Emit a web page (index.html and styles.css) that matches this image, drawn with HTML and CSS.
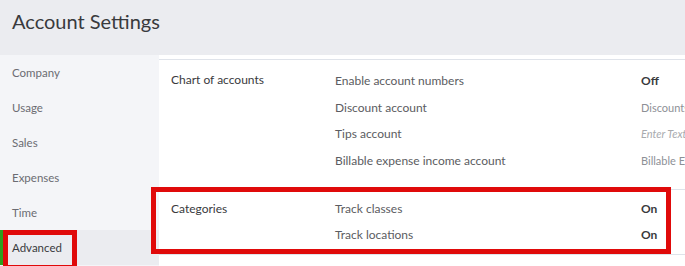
FILE: index.html
```html
<!DOCTYPE html>
<html lang="en">
<head>
<meta charset="utf-8">
<title>Account Settings</title>
<link rel="stylesheet" href="styles.css">
</head>
<body>
<div class="page">
  <header class="header">
    <h1 class="title">Account Settings</h1>
  </header>
  <div class="body">
    <nav class="sidebar">
      <div class="nav-item">Company</div>
      <div class="nav-item">Usage</div>
      <div class="nav-item">Sales</div>
      <div class="nav-item">Expenses</div>
      <div class="nav-item">Time</div>
      <div class="nav-item active">Advanced</div>
    </nav>
    <main class="main">
      <section class="section first">
        <div class="section-name">Chart of accounts</div>
        <div class="rows">
          <div class="row"><span class="label">Enable account numbers</span><span class="value strong">Off</span></div>
          <div class="row"><span class="label">Discount account</span><span class="value">Discounts given</span></div>
          <div class="row"><span class="label">Tips account</span><span class="value placeholder">Enter Text</span></div>
          <div class="row"><span class="label">Billable expense income account</span><span class="value">Billable Expense Income</span></div>
        </div>
      </section>
      <section class="section second">
        <div class="section-name">Categories</div>
        <div class="rows">
          <div class="row"><span class="label">Track classes</span><span class="value strong">On</span></div>
          <div class="row"><span class="label">Track locations</span><span class="value strong">On</span></div>
        </div>
      </section>
    </main>
  </div>
  <div class="mark mark-nav"></div>
  <div class="mark mark-section"></div>
</div>
</body>
</html>
```
FILE: styles.css
```css
* { box-sizing: border-box; }
html, body { margin: 0; padding: 0; }
body {
  width: 685px;
  height: 266px;
  overflow: hidden;
  font-family: "Lato", "Open Sans", sans-serif;
  background: #ffffff;
}
.page { position: relative; width: 685px; height: 266px; overflow: hidden; }
.header {
  height: 55px;
  background: #ebecf0;
  padding: 8px 0 0 12px;
}
.title {
  margin: 0;
  font-weight: 400;
  font-size: 20px;
  line-height: 26px;
  color: #393a3d;
}
.body { display: flex; height: 211px; }
.sidebar {
  width: 159px;
  flex: none;
  background: #f4f5f8;
}
.nav-item {
  height: 35px;
  line-height: 35px;
  padding-left: 12px;
  font-size: 11.5px;
  color: #6b6c72;
}
.nav-item.active {
  background: #ebecf0;
  border-left: 3px solid #2ca01c;
  padding-left: 9px;
  color: #393a3d;
}
.main {
  flex: 1;
  padding-top: 4px;
  background: #fff;
  overflow: hidden;
}
.section {
  display: flex;
  border-top: 1px solid #dfe3ea;
  white-space: nowrap;
}
.section.first { padding: 7px 0 15px; }
.section.second { padding: 6px 0 6px; border-bottom: 1px solid #dfe3ea; }
.section-name {
  width: 176px;
  flex: none;
  padding-left: 12px;
  font-size: 12px;
  line-height: 26px;
  color: #393a3d;
}
.rows { display: flex; flex-direction: column; }
.row { display: flex; height: 26.7px; align-items: center; font-size: 12px; }
.second .row { height: 26px; }
.label { width: 306px; flex: none; color: #5b5c61; }
.value { color: #8d9096; font-size: 11px; }
.value.strong { color: #393a3d; font-weight: 700; font-size: 12px; }
.value.placeholder { font-style: italic; color: #a8aaae; }
.mark {
  position: absolute;
  border: 5px solid #e00a0a;
}
.mark-nav { left: 3px; top: 230px; width: 74px; height: 40px; }
.mark-section { left: 151px; top: 187px; width: 520px; height: 67px; }
```
